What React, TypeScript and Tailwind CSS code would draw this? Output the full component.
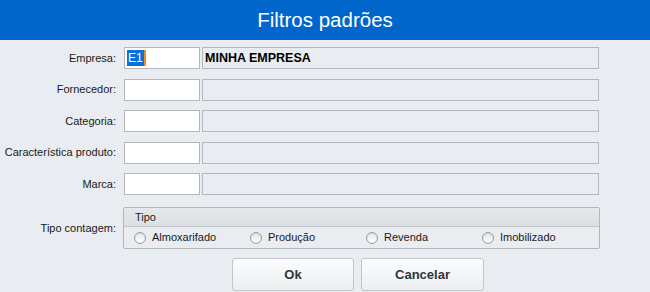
import React from "react";

const fields = [
  { label: "Empresa:", code: "E1", desc: "MINHA EMPRESA" },
  { label: "Fornecedor:", code: "", desc: "" },
  { label: "Categoria:", code: "", desc: "" },
  { label: "Característica produto:", code: "", desc: "" },
  { label: "Marca:", code: "", desc: "" },
];

const tipos = ["Almoxarifado", "Produção", "Revenda", "Imobilizado"];

function Radio({ label }: { label: string }) {
  return (
    <div className="flex w-[116px] items-center gap-[6px]">
      <span className="flex h-[12px] w-[12px] items-center justify-center rounded-full border border-[#9a9ea3] bg-gradient-to-b from-[#d8dadd] to-[#f4f5f6]">
        <span className="h-[8px] w-[8px] rounded-full bg-gradient-to-b from-[#e4e6e8] to-[#ffffff]" />
      </span>
      <span className="text-[11px] text-[#1a1a1a]">{label}</span>
    </div>
  );
}

export default function App() {
  return (
    <div
      className="flex h-[292px] w-[650px] flex-col overflow-hidden bg-[#e9ecf0]"
      style={{ fontFamily: '"Liberation Sans", Arial, sans-serif' }}
    >
      <div className="flex h-[40px] items-center justify-center bg-[#0066cc] text-[20.5px] text-white">
        Filtros padrões
      </div>

      <div className="flex flex-col gap-[9.5px] pt-[7px]">
        {fields.map((f) => (
          <div key={f.label} className="flex h-[22px] items-center">
            <div className="flex w-[116px] justify-end whitespace-nowrap text-[11px] text-[#1a1a1a]">{f.label}</div>
            <div className="ml-[8px] flex h-[22px] w-[76px] items-center border border-[#b3b7bc] bg-white pl-[2px] text-[12px]">
              {f.code && (
                <>
                  <span className="bg-[#0a6fd6] px-[1px] leading-[16px] text-white">{f.code}</span>
                  <span className="h-[16px] w-[2px] bg-[#f08a24]" />
                </>
              )}
            </div>
            <div className="ml-[2px] flex h-[22px] w-[397px] items-center border border-[#b3b7bc] bg-[#e9ecf0] pl-[2px] text-[12.5px] font-bold text-black">
              {f.desc}
            </div>
          </div>
        ))}
      </div>

      <div className="mt-[12px] flex items-center">
        <div className="flex w-[116px] justify-end whitespace-nowrap text-[11px] text-[#1a1a1a]">Tipo contagem:</div>
        <div className="ml-[7px] flex h-[42px] w-[477px] flex-col rounded-[2px] border border-[#b3b7bc]">
          <div className="flex h-[19px] items-center border-b border-[#c4c8cc] bg-gradient-to-b from-[#e6e9ec] to-[#dcdfe3] pl-[11px] text-[11px] text-[#1a1a1a]">
            Tipo
          </div>
          <div className="flex flex-1 items-center pl-[10px]">
            {tipos.map((t) => (
              <Radio key={t} label={t} />
            ))}
          </div>
        </div>
      </div>

      <div className="mt-[9px] flex gap-[7px] pl-[232px]">
        <button className="h-[33px] w-[122px] rounded-[3px] border border-[#c2c5c9] bg-gradient-to-b from-[#fbfcfd] to-[#eceff2] text-[13px] font-bold text-[#333333]">
          Ok
        </button>
        <button className="h-[33px] w-[123px] rounded-[3px] border border-[#c2c5c9] bg-gradient-to-b from-[#fbfcfd] to-[#eceff2] text-[13px] font-bold text-[#333333]">
          Cancelar
        </button>
      </div>
    </div>
  );
}
